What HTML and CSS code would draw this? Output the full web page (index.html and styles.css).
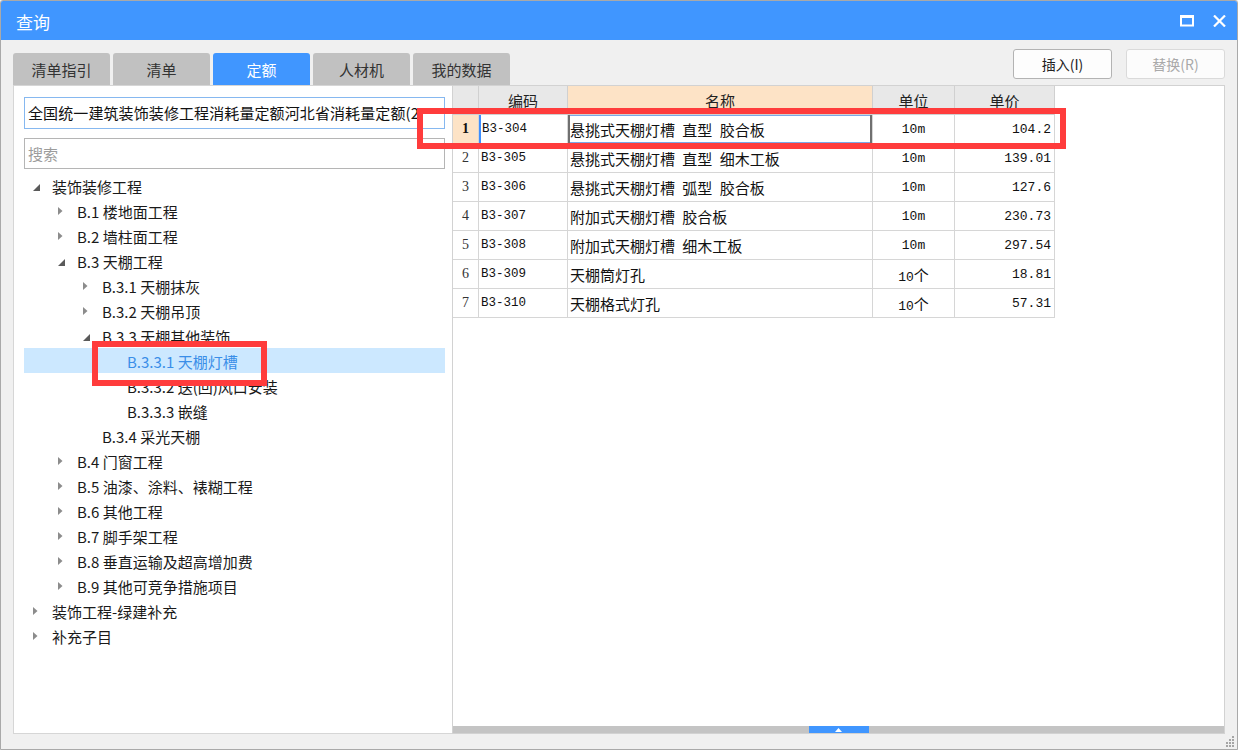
FILE: index.html
```html
<!DOCTYPE html>
<html lang="zh-CN">
<head>
<meta charset="utf-8">
<title>查询</title>
<link rel="stylesheet" href="styles.css">
</head>
<body>
<div class="window">
  <div class="titlebar">
    <span class="title">查询</span>
    <div class="win-ctrls">
      <svg class="ico-max" width="14" height="12" viewBox="0 0 14 12"><rect x="1" y="1.5" width="12" height="9" fill="none" stroke="#fff" stroke-width="2"/><rect x="0" y="0" width="14" height="3" fill="#fff"/></svg>
      <svg class="ico-close" width="13" height="12" viewBox="0 0 13 12"><path d="M1 0.5 L12 11.5 M12 0.5 L1 11.5" stroke="#fff" stroke-width="2.2" fill="none"/></svg>
    </div>
  </div>

  <div class="toolbar">
    <div class="tabs">
      <div class="tab">清单指引</div>
      <div class="tab">清单</div>
      <div class="tab active">定额</div>
      <div class="tab">人材机</div>
      <div class="tab">我的数据</div>
    </div>
    <div class="actions">
      <button class="btn">插入(I)</button>
      <button class="btn" disabled>替换(R)</button>
    </div>
  </div>

  <div class="main">
    <div class="left-panel">
      <div class="combo"><span class="combo-text">全国统一建筑装饰装修工程消耗量定额河北省消耗量定额(2012)</span></div>
      <div class="search">搜索</div>
      <ul class="tree">
        <li class="node l0"><span class="arw"><svg class="exp" width="7" height="7" viewBox="0 0 7 7"><path d="M7 0 L7 7 L0 7 Z" fill="#5a5a5a"/></svg></span>装饰装修工程</li>
        <li class="node l1"><span class="arw"><svg class="col" width="5" height="8" viewBox="0 0 5 8"><path d="M0 0 L4.5 4 L0 8 Z" fill="#8c8c8c"/></svg></span>B.1 楼地面工程</li>
        <li class="node l1"><span class="arw"><svg class="col" width="5" height="8" viewBox="0 0 5 8"><path d="M0 0 L4.5 4 L0 8 Z" fill="#8c8c8c"/></svg></span>B.2 墙柱面工程</li>
        <li class="node l1"><span class="arw"><svg class="exp" width="7" height="7" viewBox="0 0 7 7"><path d="M7 0 L7 7 L0 7 Z" fill="#5a5a5a"/></svg></span>B.3 天棚工程</li>
        <li class="node l2"><span class="arw"><svg class="col" width="5" height="8" viewBox="0 0 5 8"><path d="M0 0 L4.5 4 L0 8 Z" fill="#8c8c8c"/></svg></span>B.3.1 天棚抹灰</li>
        <li class="node l2"><span class="arw"><svg class="col" width="5" height="8" viewBox="0 0 5 8"><path d="M0 0 L4.5 4 L0 8 Z" fill="#8c8c8c"/></svg></span>B.3.2 天棚吊顶</li>
        <li class="node l2"><span class="arw"><svg class="exp" width="7" height="7" viewBox="0 0 7 7"><path d="M7 0 L7 7 L0 7 Z" fill="#5a5a5a"/></svg></span>B.3.3 天棚其他装饰</li>
        <li class="node l3 selected"><span class="arw"></span>B.3.3.1 天棚灯槽</li>
        <li class="node l3"><span class="arw"></span>B.3.3.2 送(回)风口安装</li>
        <li class="node l3"><span class="arw"></span>B.3.3.3 嵌缝</li>
        <li class="node l2"><span class="arw"></span>B.3.4 采光天棚</li>
        <li class="node l1"><span class="arw"><svg class="col" width="5" height="8" viewBox="0 0 5 8"><path d="M0 0 L4.5 4 L0 8 Z" fill="#8c8c8c"/></svg></span>B.4 门窗工程</li>
        <li class="node l1"><span class="arw"><svg class="col" width="5" height="8" viewBox="0 0 5 8"><path d="M0 0 L4.5 4 L0 8 Z" fill="#8c8c8c"/></svg></span>B.5 油漆、涂料、裱糊工程</li>
        <li class="node l1"><span class="arw"><svg class="col" width="5" height="8" viewBox="0 0 5 8"><path d="M0 0 L4.5 4 L0 8 Z" fill="#8c8c8c"/></svg></span>B.6 其他工程</li>
        <li class="node l1"><span class="arw"><svg class="col" width="5" height="8" viewBox="0 0 5 8"><path d="M0 0 L4.5 4 L0 8 Z" fill="#8c8c8c"/></svg></span>B.7 脚手架工程</li>
        <li class="node l1"><span class="arw"><svg class="col" width="5" height="8" viewBox="0 0 5 8"><path d="M0 0 L4.5 4 L0 8 Z" fill="#8c8c8c"/></svg></span>B.8 垂直运输及超高增加费</li>
        <li class="node l1"><span class="arw"><svg class="col" width="5" height="8" viewBox="0 0 5 8"><path d="M0 0 L4.5 4 L0 8 Z" fill="#8c8c8c"/></svg></span>B.9 其他可竞争措施项目</li>
        <li class="node l0"><span class="arw"><svg class="col" width="5" height="8" viewBox="0 0 5 8"><path d="M0 0 L4.5 4 L0 8 Z" fill="#8c8c8c"/></svg></span>装饰工程-绿建补充</li>
        <li class="node l0"><span class="arw"><svg class="col" width="5" height="8" viewBox="0 0 5 8"><path d="M0 0 L4.5 4 L0 8 Z" fill="#8c8c8c"/></svg></span>补充子目</li>
      </ul>
    </div>

    <div class="right-panel">
      <div class="grid-area">
        <table class="grid">
          <colgroup>
            <col class="c-no"><col class="c-code"><col class="c-name"><col class="c-unit"><col class="c-price">
          </colgroup>
          <thead>
            <tr>
              <th></th><th>编码</th><th class="hl">名称</th><th>单位</th><th>单价</th>
            </tr>
          </thead>
          <tbody>
            <tr class="cur">
              <td class="no">1</td><td class="code">B3-304</td><td class="name">悬挑式天棚灯槽 直型 胶合板</td><td class="unit">10m</td><td class="price">104.2</td>
            </tr>
            <tr>
              <td class="no">2</td><td class="code">B3-305</td><td class="name">悬挑式天棚灯槽 直型 细木工板</td><td class="unit">10m</td><td class="price">139.01</td>
            </tr>
            <tr>
              <td class="no">3</td><td class="code">B3-306</td><td class="name">悬挑式天棚灯槽 弧型 胶合板</td><td class="unit">10m</td><td class="price">127.6</td>
            </tr>
            <tr>
              <td class="no">4</td><td class="code">B3-307</td><td class="name">附加式天棚灯槽 胶合板</td><td class="unit">10m</td><td class="price">230.73</td>
            </tr>
            <tr>
              <td class="no">5</td><td class="code">B3-308</td><td class="name">附加式天棚灯槽 细木工板</td><td class="unit">10m</td><td class="price">297.54</td>
            </tr>
            <tr>
              <td class="no">6</td><td class="code">B3-309</td><td class="name">天棚筒灯孔</td><td class="unit">10<span class="cjk">个</span></td><td class="price">18.81</td>
            </tr>
            <tr>
              <td class="no">7</td><td class="code">B3-310</td><td class="name">天棚格式灯孔</td><td class="unit">10<span class="cjk">个</span></td><td class="price">57.31</td>
            </tr>
          </tbody>
        </table>
      </div>
      <div class="hbar">
        <div class="thumb"><svg width="7" height="4" viewBox="0 0 7 4"><path d="M3.5 0 L7 4 L0 4 Z" fill="#fff"/></svg></div>
      </div>
    </div>
  </div>

  <div class="statusbar"></div>

  <svg class="grip" width="11" height="11" viewBox="0 0 11 11">
    <rect x="8" y="0" width="2" height="2" fill="#a5a5a5"/>
    <rect x="5" y="3" width="2" height="2" fill="#a5a5a5"/>
    <rect x="8" y="3" width="2" height="2" fill="#a5a5a5"/>
    <rect x="2" y="6" width="2" height="2" fill="#a5a5a5"/>
    <rect x="5" y="6" width="2" height="2" fill="#a5a5a5"/>
    <rect x="8" y="6" width="2" height="2" fill="#a5a5a5"/>
    <rect x="2" y="9" width="2" height="2" fill="#a5a5a5"/>
    <rect x="5" y="9" width="2" height="2" fill="#a5a5a5"/>
    <rect x="8" y="9" width="2" height="2" fill="#a5a5a5"/>
  </svg>

  <div class="mark mark-row"></div>
  <div class="mark mark-tree"></div>
</div>
</body>
</html>
```

FILE: styles.css
```css
* { box-sizing: border-box; }

html, body {
  margin: 0;
  padding: 0;
  background: #f0f0f0;
}

body {
  font-family: "Noto Sans CJK SC", "Noto Sans", sans-serif;
  color: #222;
}

.window {
  position: relative;
  width: 1238px;
  height: 750px;
  border: 1px solid #a9a9a9;
  border-radius: 3px 3px 0 0;
  background: #f0f0f0;
  display: flex;
  flex-direction: column;
  overflow: hidden;
}

/* title bar */
.titlebar {
  height: 39px;
  flex-shrink: 0;
  background: #4096ff;
  display: flex;
  align-items: center;
  padding: 0 11px 0 15px;
}

.title {
  color: #fff;
  font-size: 17px;
  line-height: 1;
  margin-top: 2px;
}

.win-ctrls {
  margin-left: auto;
  display: flex;
  align-items: center;
  gap: 19px;
}

.ico-max, .ico-close { display: block; }

/* toolbar: tabs + buttons */
.toolbar {
  height: 45px;
  flex-shrink: 0;
  display: flex;
  justify-content: space-between;
  padding: 0 12px;
}

.tabs {
  align-self: flex-end;
  display: flex;
  gap: 3px;
}

.tab {
  width: 97px;
  height: 32px;
  background: #c1c1c1;
  border-radius: 3px 3px 0 0;
  display: flex;
  align-items: center;
  justify-content: center;
  font-size: 15px;
  color: #333;
}

.tab.active {
  background: #4096ff;
  color: #fff;
}

.actions {
  margin-top: 9px;
  display: flex;
  gap: 14px;
  align-items: flex-start;
}

.btn {
  width: 99px;
  height: 30px;
  background: #fdfdfd;
  border: 1px solid #b3b3b3;
  border-radius: 3px;
  font-family: "Noto Sans CJK SC", "Noto Sans", sans-serif;
  font-size: 14px;
  color: #222;
  padding: 0;
}

.btn:disabled {
  border-color: #dadada;
  color: #a9a9a9;
  background: #fcfcfc;
}

/* main area */
.main {
  height: 649px;
  flex-shrink: 0;
  display: flex;
  padding: 0 12px;
}

.left-panel {
  width: 439px;
  flex-shrink: 0;
  background: #fff;
  border: 1px solid #d6d6d6;
  border-right: none;
  padding: 11px 7px 0 10px;
  overflow: hidden;
}

.combo {
  height: 32px;
  border: 1px solid #86b8f0;
  padding: 0 24px 0 3px;
  font-size: 15px;
  line-height: 30px;
  color: #111;
}

.combo-text {
  display: block;
  white-space: nowrap;
  overflow: hidden;
  letter-spacing: 0.1px;
}

.search {
  margin-top: 9px;
  height: 31px;
  border: 1px solid #b5b5b5;
  padding: 0 3px;
  font-size: 15px;
  line-height: 29px;
  color: #9c9c9c;
}

.tree {
  list-style: none;
  margin: 4px 0 0 0;
  padding: 0;
}

.node {
  height: 25px;
  display: flex;
  align-items: center;
  font-size: 15px;
  color: #1a1a1a;
  white-space: nowrap;
  padding-top: 1px;
}

.node.l0 { padding-left: 0; }
.node.l1 { padding-left: 25px; }
.node.l2 { padding-left: 50px; }
.node.l3 { padding-left: 75px; }

.node.selected {
  background: #cce8ff;
  color: #3a8ee8;
}

.arw {
  width: 28px;
  flex-shrink: 0;
  display: flex;
  align-items: center;
  padding-left: 9px;
}

.arw svg { display: block; }
.arw .exp { margin-top: 2px; }

/* right panel */
.right-panel {
  flex: 1;
  background: #fff;
  border: 1px solid #d2d2d2;
  display: flex;
  flex-direction: column;
  min-width: 0;
}

.grid-area {
  flex: 1;
  overflow: hidden;
}

.grid {
  border-collapse: separate;
  border-spacing: 0;
  table-layout: fixed;
  width: 602px;
}

.c-no { width: 26px; }
.c-code { width: 89px; }
.c-name { width: 305px; }
.c-unit { width: 82px; }
.c-price { width: 100px; }

.grid th, .grid td {
  height: 29px;
  border-right: 1px solid #d6d6d6;
  border-bottom: 1px solid #d6d6d6;
  padding: 0 3px;
  white-space: nowrap;
  overflow: hidden;
}

.grid th {
  background: #e8e8e8;
  font-weight: normal;
  font-size: 15px;
  color: #222;
  text-align: center;
  border-color: #d0d0d0;
}

.grid th.hl {
  background: #fde3c6;
}

.grid td {
  font-size: 15px;
  color: #111;
}

.grid td.no {
  font-family: "Liberation Serif", serif;
  font-size: 14px;
  text-align: center;
  color: #333;
  padding: 0;
}

.grid td.code {
  font-family: "Liberation Mono", monospace;
  font-size: 12.5px;
  padding-left: 2px;
}

.grid td.name {
  padding-left: 2px;
  word-spacing: 4px;
}

.grid td.unit {
  font-family: "Liberation Mono", monospace;
  font-size: 13px;
  text-align: center;
}

.grid td.unit .cjk {
  font-family: "Noto Sans CJK SC", sans-serif;
  font-size: 15px;
}

.grid td.price {
  font-family: "Liberation Mono", monospace;
  font-size: 13px;
  text-align: right;
  padding-right: 3px;
}

.grid tr.cur td.no {
  background: #fde3c6;
  font-weight: bold;
  color: #111;
}

.grid tr.cur td.code {
  box-shadow: inset 2px 0 0 #3d8eff;
  padding-left: 3px;
}

.grid tr.cur td.name {
  box-shadow: inset 2px 0 0 #707070, inset -2px 0 0 #707070, inset 0 1px 0 #7aa8e8, inset 0 -1px 0 #7aa8e8;
}

.hbar {
  height: 7px;
  flex-shrink: 0;
  background: #c4c4c4;
  display: flex;
  justify-content: center;
}

.thumb {
  width: 60px;
  height: 7px;
  background: #4096ff;
  display: flex;
  align-items: center;
  justify-content: center;
}

.thumb svg { display: block; }

.statusbar {
  flex: 1;
}

/* resize grip in corner */
.grip {
  position: absolute;
  right: 2px;
  bottom: 2px;
}

/* red annotation boxes drawn over the screenshot */
.mark {
  position: absolute;
  border: 6px solid #ff3c3c;
  pointer-events: none;
}

.mark-row {
  left: 416px;
  top: 107px;
  width: 649px;
  height: 41px;
}

.mark-tree {
  left: 91px;
  top: 340px;
  width: 175px;
  height: 45px;
}
```
